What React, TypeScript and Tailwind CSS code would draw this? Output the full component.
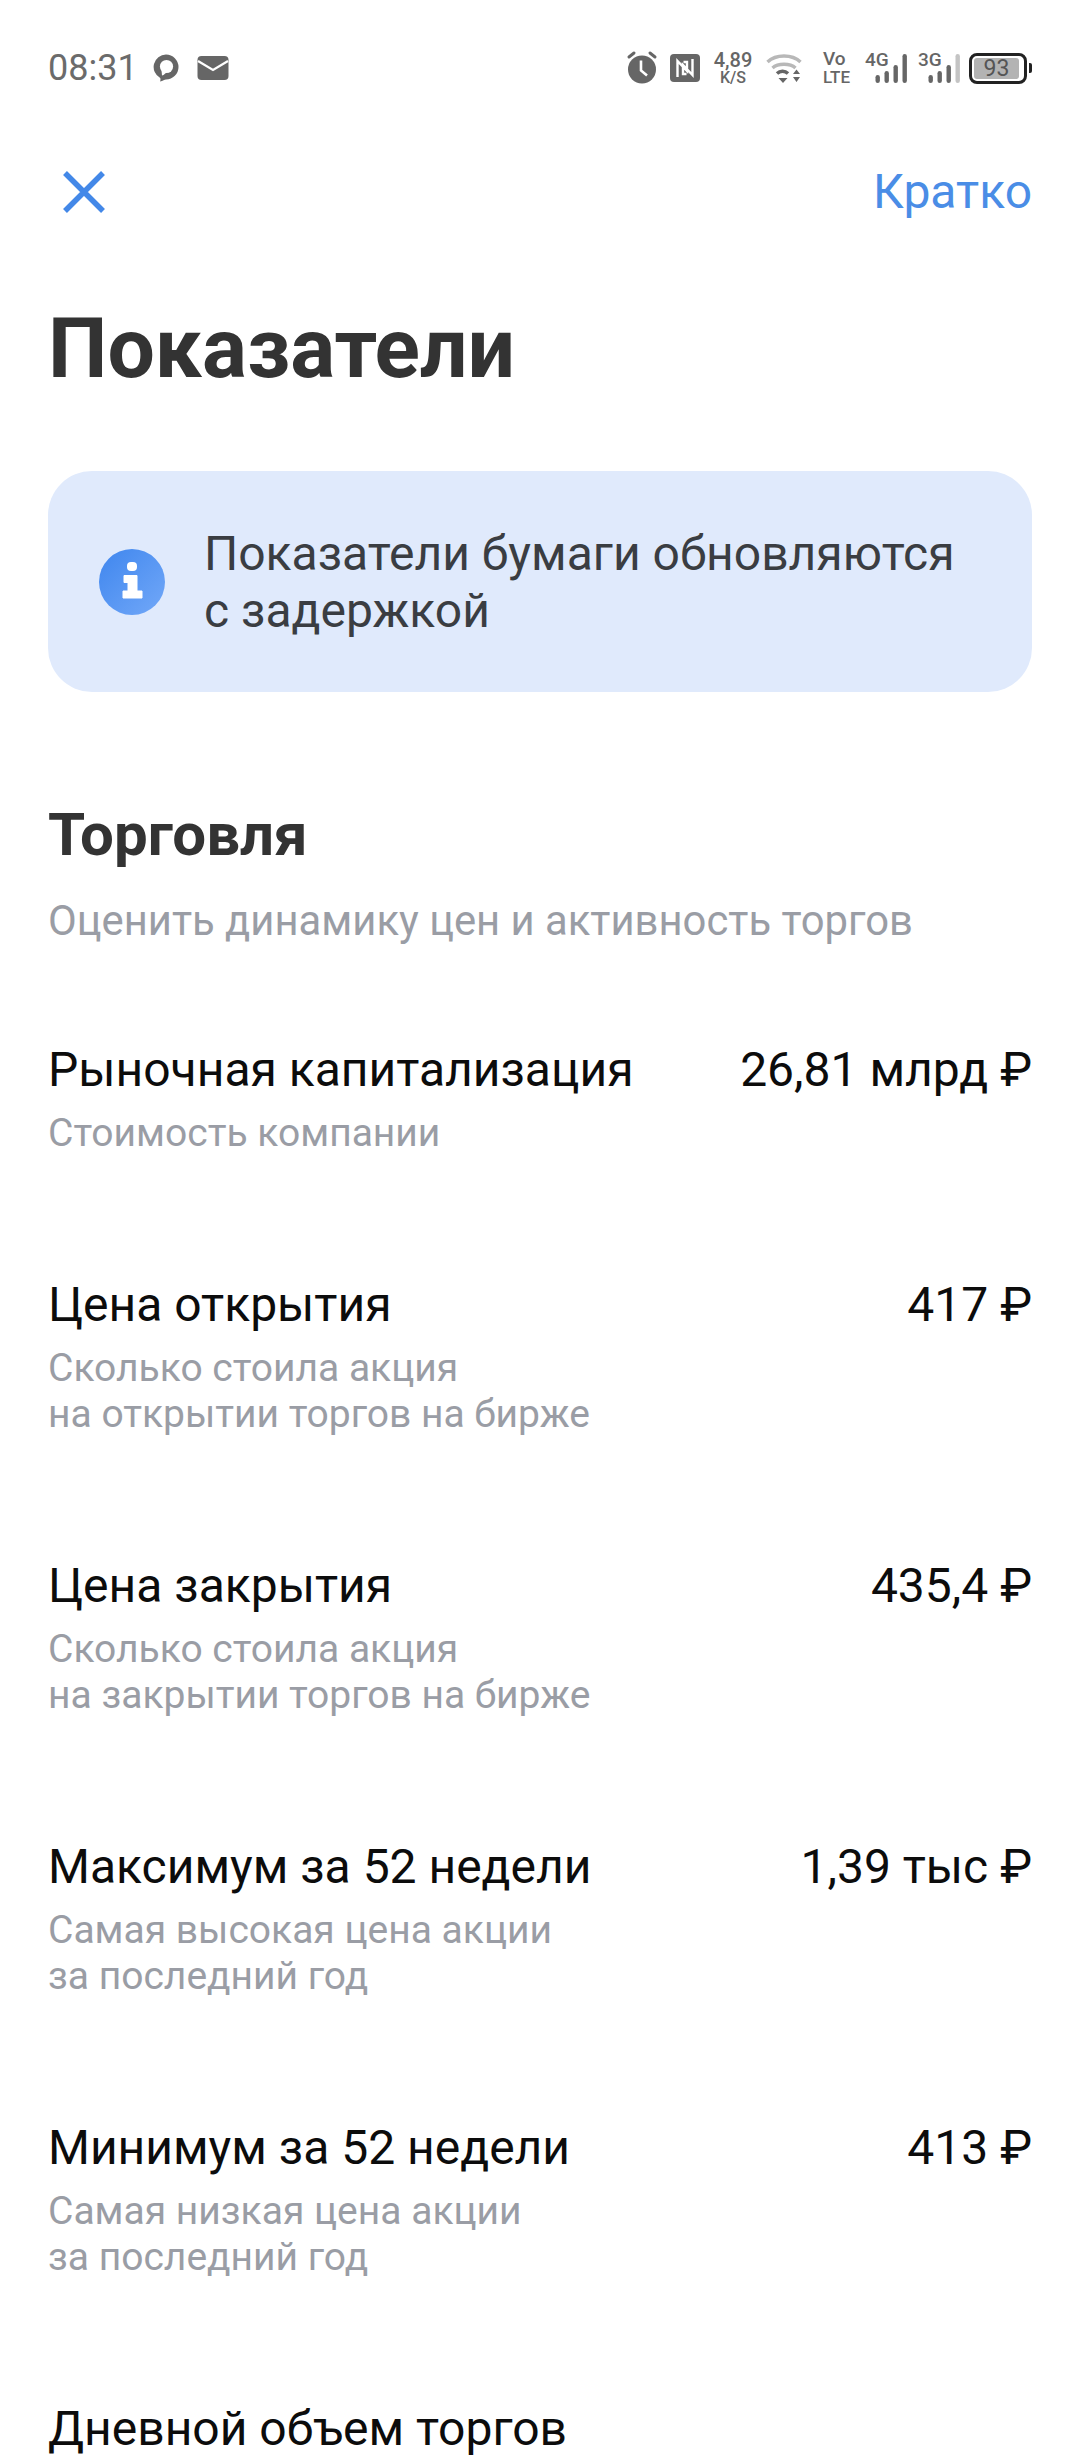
import React from "react";

const rows = [
  { name: "Рыночная капитализация", value: "26,81 млрд ₽", sub: ["Стоимость компании"] },
  { name: "Цена открытия", value: "417 ₽", sub: ["Сколько стоила акция", "на открытии торгов на бирже"] },
  { name: "Цена закрытия", value: "435,4 ₽", sub: ["Сколько стоила акция", "на закрытии торгов на бирже"] },
  { name: "Максимум за 52 недели", value: "1,39 тыс ₽", sub: ["Самая высокая цена акции", "за последний год"] },
  { name: "Минимум за 52 недели", value: "413 ₽", sub: ["Самая низкая цена акции", "за последний год"] },
  { name: "Дневной объем торгов", value: "", sub: [] },
];

function Signal({ label, lastDim }: { label: string; lastDim?: boolean }) {
  return (
    <div className="relative w-[42px] h-[36px]">
      <span className="absolute left-0 top-[0px] text-[19px] leading-[19px] font-medium text-[#666666]">{label}</span>
      <svg width="42" height="36" viewBox="0 0 42 36" className="absolute left-0 top-0">
        <g strokeWidth="4.4" strokeLinecap="round" stroke="#666666">
          <path d="M12.700 27.200v3.600" />
          <path d="M21.700 23.200v7.600" />
          <path d="M30.700 17.200v13.600" />
          <path d="M39.700 6.200v24.600" stroke={lastDim ? "#c4c4c4" : "#666666"} />
        </g>
      </svg>
    </div>
  );
}

function StatusBar() {
  return (
    <div className="flex items-center justify-between h-[36px] mt-[50px] pl-[48px] pr-[48px]">
      <div className="flex items-center">
        <span className="text-[36px] leading-[36px] text-[#6b6b6b]">08:31</span>
        <svg width="26" height="28" viewBox="0 0 26 28" className="ml-[15px]">
          <path d="M13 0.500a12.500 12.500 0 0 1 0 25c-1.500 0-3 1.500-6 2 .6-1 .6-2.500 .2-3.500A12.500 12.500 0 0 1 13 .5z" fill="#666666" />
          <circle cx="13.500" cy="12.500" r="6.600" fill="#ffffff" />
          <path d="M8.500 16l5 2.500-3 2.500-1.500 .5z" fill="#ffffff" />
        </svg>
        <svg width="32" height="26" viewBox="0 0 32 26" className="ml-[18px]">
          <rect x="0.500" y="1" width="31" height="24" rx="4" fill="#666666" />
          <path d="M1 6l15 9 15-9" fill="none" stroke="#ffffff" strokeWidth="2.200" />
        </svg>
      </div>
      <div className="flex items-center">
        <svg width="34" height="36" viewBox="0 0 34 36">
          <path d="M4 7l5-4M30 7l-5-4" stroke="#666666" strokeWidth="3" strokeLinecap="round" />
          <circle cx="17" cy="19.500" r="14" fill="#666666" />
          <path d="M16 10.500v10l6 5" fill="none" stroke="#ffffff" strokeWidth="2.600" />
        </svg>
        <svg width="30" height="28" viewBox="0 0 30 28" className="ml-[11px]">
          <rect width="30" height="28" rx="4" fill="#666666" />
          <path d="M7.500 23V7L17 17V8h-3.500M22.500 5v16L13 11v9h3.500" fill="none" stroke="#ffffff" strokeWidth="2.400" />
        </svg>
        <div className="ml-[13px] w-[40px] flex flex-col items-center font-medium text-[#666666]">
          <span className="text-[20px] leading-[20px]">4,89</span>
          <span className="text-[16px] leading-[16px]">K/S</span>
        </div>
        <svg width="36" height="32" viewBox="0 0 36 32" className="ml-[13px]">
          <path d="M1.500 10C10 2 26 2 34.500 10" fill="none" stroke="#b8b8b8" strokeWidth="3.400" />
          <path d="M6.500 16C12 11 24 11 29.500 16" fill="none" stroke="#b8b8b8" strokeWidth="3.400" />
          <path d="M11 21.500c3-3 8-3 11 0" fill="none" stroke="#666666" strokeWidth="3.400" />
          <path d="M12.500 26h9L17 31zM27 22l3.500-4.500L34 22zM27 25h7l-3.500 5z" fill="#666666" />
        </svg>
        <div className="ml-[21px] w-[30px] flex flex-col items-start font-medium text-[#666666]">
          <span className="text-[19px] leading-[18px]">Vo</span>
          <span className="text-[17px] leading-[18px]">LTE</span>
        </div>
        <div className="ml-[12px]"><Signal label="4G" /></div>
        <div className="ml-[11px]"><Signal label="3G" lastDim /></div>
        <div className="ml-[9px] flex items-center">
          <div className="w-[58px] h-[31px] rounded-[8px] border-[3px] border-[#222222] p-[2px] pr-[5px] flex">
            <div className="flex-1 rounded-[3px] bg-[#b3b3b3] flex items-center justify-center text-[23px] leading-[23px] text-[#555555]">93</div>
          </div>
          <div className="w-[3px] h-[10px] bg-[#222222] rounded-r-[2px] ml-[2px]" />
        </div>
      </div>
    </div>
  );
}

function InfoIcon() {
  return (
    <svg width="66" height="66" viewBox="0 0 66 66" className="shrink-0">
      <defs>
        <linearGradient id="infoFill" x1="0" y1="0" x2="1" y2="1">
          <stop offset="0" stopColor="#3f86ee" />
          <stop offset="1" stopColor="#72a8f8" />
        </linearGradient>
      </defs>
      <circle cx="33" cy="33" r="33" fill="url(#infoFill)" />
      <rect x="28" y="13" width="10" height="9" rx="4" fill="#ffffff" />
      <path d="M25 26.500h13v15.500h5v7H24v-7h5v-8.500h-4z" fill="#ffffff" strokeLinejoin="round" stroke="#ffffff" strokeWidth="1" />
    </svg>
  );
}

export default function App() {
  return (
    <div className="w-[1080px] h-[2460px] overflow-hidden bg-white font-['Roboto',sans-serif]">
      <StatusBar />

      <div className="flex items-center justify-between mt-[76px] pl-[48px] pr-[48px] h-[60px]">
        <svg width="60" height="60" viewBox="0 0 60 60" className="ml-[6px]">
          <path d="M11 11l38 38M49 11L11 49" stroke="#4388e8" strokeWidth="5.500" />
        </svg>
        <span className="text-[48px] leading-[60px] text-[#4a8de6]">Кратко</span>
      </div>

      <h1 className="mt-[77px] ml-[48px] text-[84px] leading-[100px] font-bold text-[#333333]">Показатели</h1>

      <div className="mt-[72px] mx-[48px] h-[221px] rounded-[44px] bg-[#e0eafc] flex items-center pl-[51px] pr-[40px]">
        <InfoIcon />
        <p className="ml-[39px] text-[48px] leading-[57px] text-[#3a3d42]">
          Показатели бумаги обновляются<br />с задержкой
        </p>
      </div>

      <h2 className="mt-[108px] ml-[48px] text-[60px] leading-[70px] font-bold text-[#333333]">Торговля</h2>
      <p className="mt-[26px] ml-[48px] text-[41.8px] leading-[50px] text-[#9a9da5]">Оценить динамику цен и активность торгов</p>

      <div className="mt-[96px] mx-[48px] flex flex-col gap-[122px]">
        {rows.map((r) => (
          <div key={r.name}>
            <div className="flex items-center justify-between h-[56px]">
              <span className="text-[48px] leading-[56px] text-[#0c0c0c]">{r.name}</span>
              <span className="text-[48px] leading-[56px] text-[#0c0c0c]">{r.value}</span>
            </div>
            {r.sub.length > 0 && (
              <div className="mt-[12px] mb-[-1px] text-[39px] leading-[46px] text-[#9a9da5]">
                {r.sub.map((line) => (
                  <div key={line}>{line}</div>
                ))}
              </div>
            )}
          </div>
        ))}
      </div>
    </div>
  );
}
